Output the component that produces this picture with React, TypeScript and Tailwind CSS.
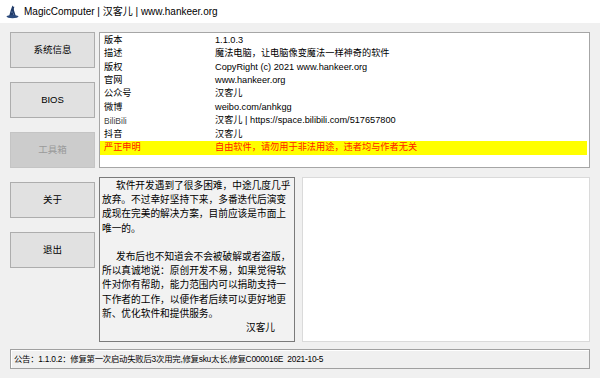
import React from "react";

const FONT = { fontFamily: '"Liberation Sans", "Noto Sans CJK SC", sans-serif' };

const rows: { k: string; v: string; hl?: boolean; small?: boolean }[] = [
  { k: "版本", v: "1.1.0.3" },
  { k: "描述", v: "魔法电脑，让电脑像变魔法一样神奇的软件" },
  { k: "版权", v: "CopyRight (c) 2021 www.hankeer.org" },
  { k: "官网", v: "www.hankeer.org" },
  { k: "公众号", v: "汉客儿" },
  { k: "微博", v: "weibo.com/anhkgg" },
  { k: "BiliBili", v: "汉客儿 | https://space.bilibili.com/517657800", small: true },
  { k: "抖音", v: "汉客儿" },
  { k: "严正申明", v: "自由软件，请勿用于非法用途，违者均与作者无关", hl: true },
];

const buttons: { t: string; disabled?: boolean }[] = [
  { t: "系统信息" },
  { t: "BIOS" },
  { t: "工具箱", disabled: true },
  { t: "关于" },
  { t: "退出" },
];

const lines = [
  { t: "软件开发遇到了很多困难，中途几度几乎", indent: true },
  { t: "放弃。不过幸好坚持下来，多番迭代后演变" },
  { t: "成现在完美的解决方案，目前应该是市面上" },
  { t: "唯一的。" },
  { t: "\u00a0" },
  { t: "发布后也不知道会不会被破解或者盗版，", indent: true },
  { t: "所以真诚地说：原创开发不易，如果觉得软" },
  { t: "件对你有帮助，能力范围内可以捐助支持一" },
  { t: "下作者的工作，以便作者后续可以更好地更" },
  { t: "新、优化软件和提供服务。" },
];

export default function App() {
  return (
    <div className="w-[600px] h-[378px] bg-[#f0f0f0] flex flex-col overflow-hidden text-black" style={FONT}>
      {/* Title bar */}
      <div className="h-[23px] bg-white flex items-center pl-[6px] gap-[5px] shrink-0">
        <svg width="13" height="14" viewBox="0 0 13 14">
          <path d="M6.5 0.5 C6 2 5.5 3 4.8 5 L3.2 11 L9.8 11 L8.2 6 C7.8 4.5 7.6 3 8.5 1.8 C7.6 2.2 7.1 1.4 6.5 0.5 Z" fill="#1f3a68" />
          <ellipse cx="6.5" cy="11.6" rx="6" ry="1.6" fill="#2b4a7c" />
          <circle cx="6" cy="7" r="0.6" fill="#9fb7e0" />
          <circle cx="7.5" cy="9" r="0.5" fill="#9fb7e0" />
        </svg>
        <span className="text-[10px] leading-none">MagicComputer | 汉客儿 | www.hankeer.org</span>
      </div>

      {/* Body */}
      <div className="flex px-[10px] pt-[9px] gap-[4px]">
        <div className="w-[85px] flex flex-col gap-[14px] shrink-0">
          {buttons.map((b) => (
            <div
              key={b.t}
              className={
                b.disabled
                  ? "h-[36px] bg-[#cccccc] border border-[#c4c4c4] flex items-center justify-center text-[9.5px] text-[#9a9a9a]"
                  : "h-[36px] bg-[#e1e1e1] border border-[#adadad] flex items-center justify-center text-[9.5px]"
              }
            >
              {b.t}
            </div>
          ))}
        </div>

        <div className="w-[491px] flex flex-col gap-[9px]">
          {/* Info list */}
          <div className="h-[136px] bg-white border border-[#a6a6a6] pt-[1px] pr-[2px]">
            {rows.map((r) => (
              <div
                key={r.k}
                className={
                  r.hl
                    ? "h-[13.4px] flex items-center bg-[#ffff00] text-[#ff2000] text-[9.2px] whitespace-nowrap"
                    : "h-[13.4px] flex items-center text-[9.2px] whitespace-nowrap"
                }
              >
                <span className={r.small ? "w-[115px] pl-[4px] text-[8.5px] text-[#444]" : "w-[115px] pl-[4px]"}>{r.k}</span>
                <span>{r.v}</span>
              </div>
            ))}
          </div>

          {/* Bottom row */}
          <div className="flex gap-[7px] h-[165px]">
            <div className="w-[196px] border border-[#7a7a7a] bg-[#f2f2f2] pl-[2px] pt-[1px] text-[9.7px] leading-[14.2px] whitespace-nowrap">
              {lines.map((l, i) => (
                <div key={i} className={l.indent ? "pl-[14px]" : ""}>
                  {l.t}
                </div>
              ))}
              <div className="pl-[144px]">汉客儿</div>
            </div>
            <div className="w-[288px] bg-white border border-[#dadada]" />
          </div>
        </div>
      </div>

      {/* Status bar */}
      <div className="mx-[10px] mt-[7px] h-[20px] border border-[#a0a0a0] bg-[#f0f0f0] shadow-[inset_1px_1px_0_#ffffff] flex items-center pl-[3px] text-[8.4px] tracking-[-0.25px] whitespace-nowrap">
        公告：1.1.0.2：修复第一次启动失败后3次用完,修复sku太长,修复C000016E&nbsp;&nbsp;2021-10-5
      </div>
    </div>
  );
}
